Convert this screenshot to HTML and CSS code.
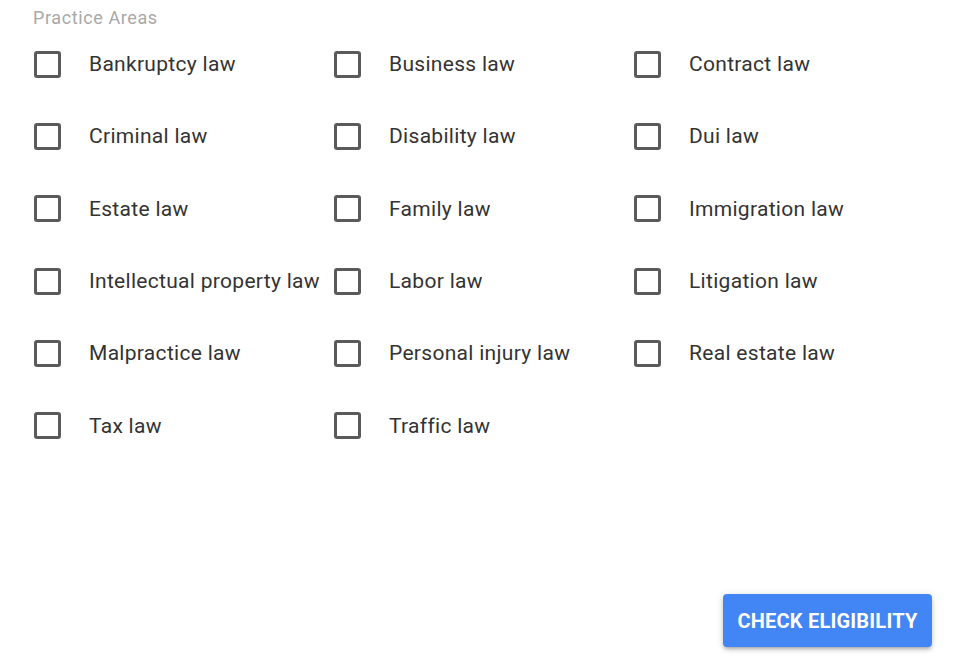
FILE: index.html
```html
<!DOCTYPE html>
<html lang="en">
<head>
    <meta charset="UTF-8">
    <meta name="viewport" content="width=device-width, initial-scale=1.0">
    <title>Practice Areas</title>
    <link rel="stylesheet" href="styles.css">
</head>
<body>
    <div class="page">
        <div class="section-title">Practice Areas</div>
        <div class="areas">
            <label class="area"><span class="box"></span><span class="area-name">Bankruptcy law</span></label>
            <label class="area"><span class="box"></span><span class="area-name">Business law</span></label>
            <label class="area"><span class="box"></span><span class="area-name">Contract law</span></label>
            <label class="area"><span class="box"></span><span class="area-name">Criminal law</span></label>
            <label class="area"><span class="box"></span><span class="area-name">Disability law</span></label>
            <label class="area"><span class="box"></span><span class="area-name">Dui law</span></label>
            <label class="area"><span class="box"></span><span class="area-name">Estate law</span></label>
            <label class="area"><span class="box"></span><span class="area-name">Family law</span></label>
            <label class="area"><span class="box"></span><span class="area-name">Immigration law</span></label>
            <label class="area"><span class="box"></span><span class="area-name">Intellectual property law</span></label>
            <label class="area"><span class="box"></span><span class="area-name">Labor law</span></label>
            <label class="area"><span class="box"></span><span class="area-name">Litigation law</span></label>
            <label class="area"><span class="box"></span><span class="area-name">Malpractice law</span></label>
            <label class="area"><span class="box"></span><span class="area-name">Personal injury law</span></label>
            <label class="area"><span class="box"></span><span class="area-name">Real estate law</span></label>
            <label class="area"><span class="box"></span><span class="area-name">Tax law</span></label>
            <label class="area"><span class="box"></span><span class="area-name">Traffic law</span></label>
        </div>
        <div class="actions">
            <button class="check-btn">Check Eligibility</button>
        </div>
    </div>
</body>
</html>
```

FILE: styles.css
```css
* {
    margin: 0;
    padding: 0;
    box-sizing: border-box;
    font-family: Roboto, "Liberation Sans", Arial, sans-serif;
}
body {
    background: #fff;
}
.page {
    display: flex;
    flex-direction: column;
    height: 100vh;
    padding: 7px 28px 22px 33px;
}
.section-title {
    font-size: 18px;
    line-height: 22px;
    letter-spacing: 0.6px;
    color: #a8a8a8;
}
.areas {
    display: grid;
    grid-template-columns: 300px 300px 300px;
    grid-auto-rows: 72.3px;
    margin-top: -1px;
}
.area {
    display: flex;
    align-items: center;
    cursor: pointer;
}
.box {
    width: 27px;
    height: 27px;
    border: 3px solid #5a5a5a;
    border-radius: 3px;
    margin-left: 1px;
    flex-shrink: 0;
}
.area-name {
    margin-left: 28px;
    font-size: 21px;
    letter-spacing: 0.3px;
    color: #333;
    white-space: nowrap;
}
.actions {
    margin-top: auto;
    display: flex;
    justify-content: flex-end;
}
.check-btn {
    background: #4285f4;
    color: #fff;
    border: none;
    border-radius: 4px;
    width: 209px;
    height: 53px;
    font-size: 20px;
    font-weight: 700;
    text-transform: uppercase;
    letter-spacing: 0.2px;
    box-shadow: 0 3px 3px -2px rgba(0,0,0,.2), 0 3px 4px 0 rgba(0,0,0,.14), 0 1px 8px 0 rgba(0,0,0,.12);
    cursor: pointer;
}
```
